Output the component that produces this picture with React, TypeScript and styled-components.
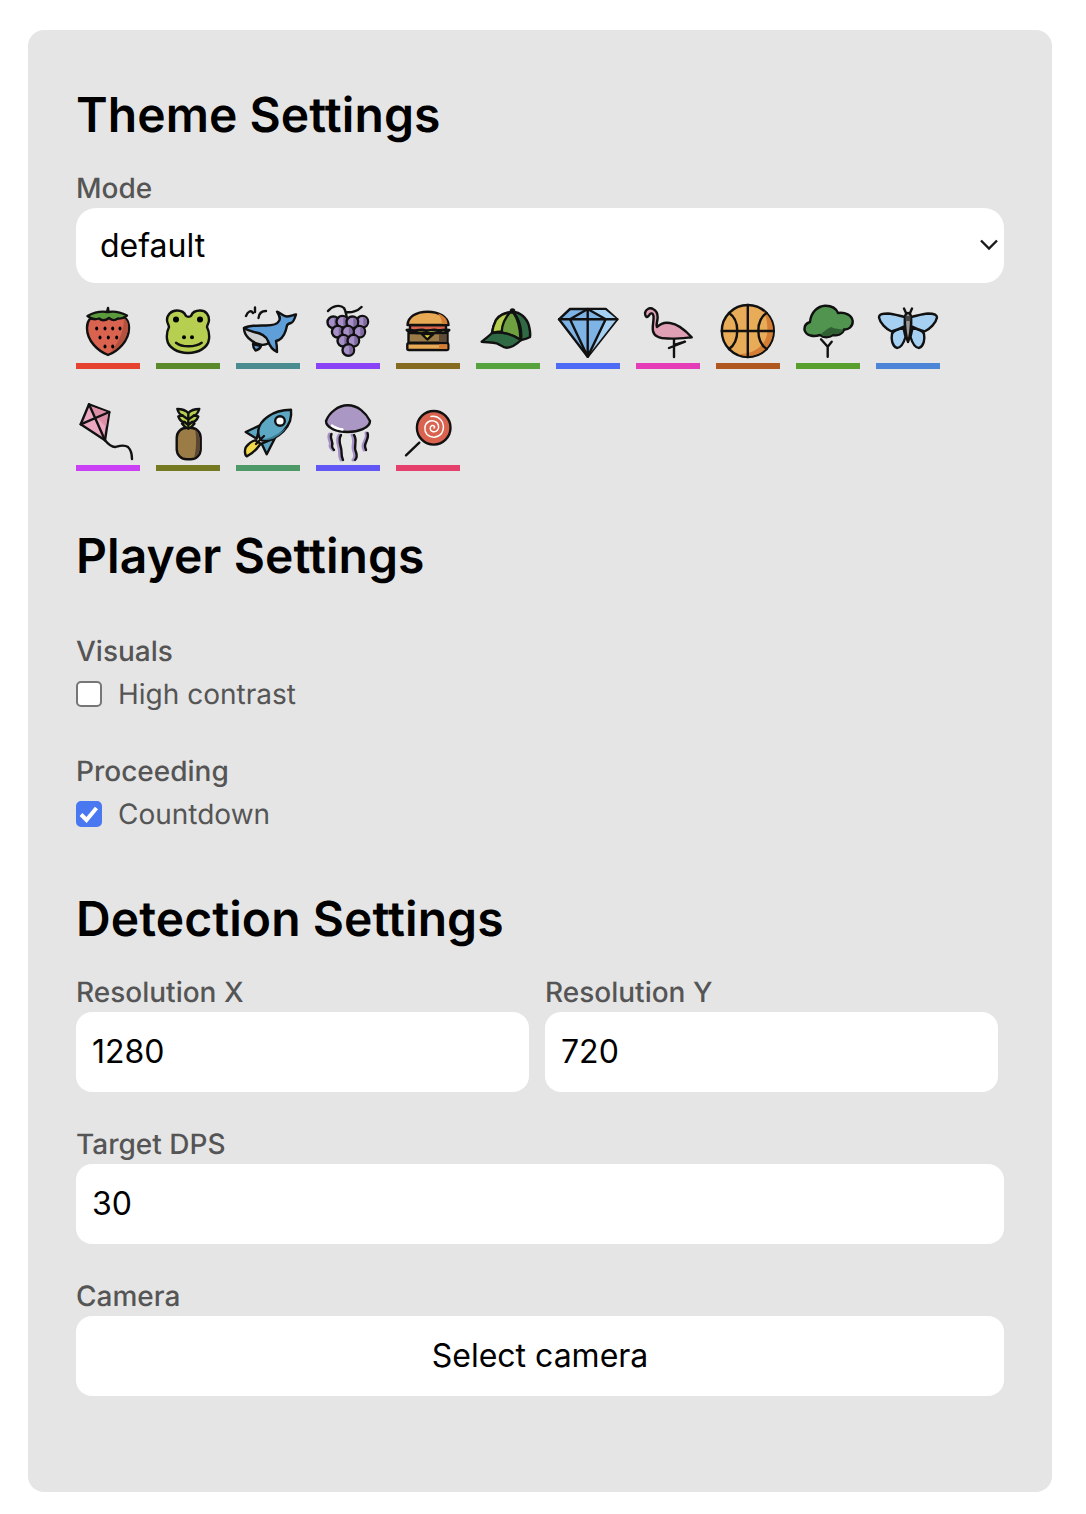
import React from "react";
import styled, { createGlobalStyle } from "styled-components";

const Global = createGlobalStyle`
  html, body { margin: 0; padding: 0; background: #fff; }
  body { font-family: Inter, "Liberation Sans", sans-serif; text-rendering: geometricPrecision; }
`;

const Page = styled.div`
  padding: 30px 34px 22px 28px;
`;

const Panel = styled.main`
  background: #e5e5e5;
  border-radius: 16px;
  padding: 56px 48px 96px;
  display: flex;
  flex-direction: column;
`;

const Heading = styled.h2<{ $top?: number; $bottom: number }>`
  margin: ${(p) => p.$top ?? 0}px 0 ${(p) => p.$bottom}px;
  font-size: 48px;
  line-height: 58px;
  font-weight: 600;
  letter-spacing: 0.07px;
  color: #000;
`;

const Label = styled.label`
  display: block;
  font-size: 28px;
  line-height: 34px;
  font-weight: 500;
  margin-bottom: 3px;
  color: #555;
`;

const SelectWrap = styled.div`
  position: relative;
`;

const Select = styled.select`
  display: block;
  width: 100%;
  height: 75px;
  border: none;
  border-radius: 20px;
  background: #fff;
  color: #000;
  padding: 0 24px;
  font: 32px Inter, sans-serif;
  appearance: none;
`;

const Chevron = styled.svg`
  position: absolute;
  right: 6px;
  top: 31px;
  width: 18px;
  height: 12px;
  fill: none;
  stroke: #1a1a1a;
  stroke-width: 2.4;
  pointer-events: none;
`;

const ThemeRow = styled.div`
  display: flex;
  flex-wrap: wrap;
  gap: 36px 16px;
  margin-top: 20px;
  width: 880px;
`;

const ThemeItem = styled.div<{ $color: string }>`
  width: 64px;
  height: 66px;
  box-sizing: border-box;
  padding: 0 4px 4px;
  border-bottom: 6px solid ${(p) => p.$color};
`;

const Glyph = styled.svg`
  display: block;
  width: 56px;
  height: 56px;
  overflow: visible;
  fill: none;
  stroke: #111;
  stroke-width: 2.4;
  stroke-linejoin: round;
  stroke-linecap: round;
  filter: blur(0.35px);
`;

const Group = styled.section<{ $top: number }>`
  margin-top: ${(p) => p.$top}px;
`;

const CheckRow = styled.div`
  display: flex;
  align-items: center;
  height: 34px;
  margin-top: 9px;
  gap: 16px;
  font-size: 28px;
  color: #555;
`;

const Check = styled.input`
  appearance: none;
  box-sizing: border-box;
  width: 26px;
  height: 26px;
  margin: 0;
  border: 2px solid #767676;
  border-radius: 5px;
  background: #fff;
  &:checked {
    border-color: #4a78f0;
    background: #4a78f0 url("data:image/svg+xml,%3Csvg xmlns='http://www.w3.org/2000/svg' viewBox='0 0 26 26'%3E%3Cpath d='M5 13.5L10.5 19L20.5 7' fill='none' stroke='white' stroke-width='4'/%3E%3C/svg%3E") -2px -2px / 26px 26px no-repeat;
  }
`;

const Columns = styled.div`
  display: grid;
  grid-template-columns: 453px 453px;
  gap: 16px;
`;

const NumberInput = styled.input`
  display: block;
  box-sizing: border-box;
  width: 100%;
  height: 80px;
  border: none;
  border-radius: 16px;
  background: #fff;
  color: #000;
  padding: 0 16px 2px;
  font: 32px Inter, sans-serif;
  outline: none;
`;

const Button = styled.button`
  display: block;
  width: 100%;
  height: 80px;
  border: none;
  border-radius: 16px;
  background: #fff;
  color: #000;
  padding: 0 0 2px;
  font: 32px Inter, sans-serif;
`;

const Strawberry = () => (
  <Glyph viewBox="0 0 56 56">
    <path fill="#d9634f" d="M28 52C18 48 7 38 7 25C7 16 12 13 18 13C22 13 25 14 28 15C31 14 35 13 39 13C45 13 49 17 49 25C49 38 38 48 28 52Z" />
    <path fill="#b5513f" stroke="none" d="M44 15C48 18 48.5 22 48 27C46 38 38 46 30 50C36 42 44 32 44 15Z" />
    <path fill="#5c9a3e" d="M28 5L28.5 9C34 8 42 10 47 12.5C44 15 41 16 38 15.5C35 17.5 33 18 29 15C25 18 22 18 19 15.5C15 17 11 16 7.5 13C13 10 21 8 27 9Z" />
    <g fill="#000" stroke="none">
      <ellipse cx="16.7" cy="25.5" rx="1.5" ry="2.1" /><ellipse cx="25" cy="25.5" rx="1.5" ry="2.1" />
      <ellipse cx="32.7" cy="25.5" rx="1.5" ry="2.1" /><ellipse cx="40" cy="25.5" rx="1.5" ry="2.1" />
      <ellipse cx="20" cy="34.5" rx="1.5" ry="2.1" /><ellipse cx="28.3" cy="34.5" rx="1.5" ry="2.1" />
      <ellipse cx="36.7" cy="34.5" rx="1.5" ry="2.1" /><ellipse cx="25" cy="43.5" rx="1.5" ry="2.1" />
      <ellipse cx="32.7" cy="43.5" rx="1.5" ry="2.1" />
    </g>
  </Glyph>
);

const Frog = () => (
  <Glyph viewBox="0 0 56 56">
    <path fill="#b7cf50" d="M17 7.5C22 7.5 25 10.5 26 13C27 14 30 14 31 13C32 10 35 7.5 40 7.5C46 7.5 49 12 49 17C49 20 47 22 47 24C49 28 49.5 32 49 36C48 45 38 50 28 50C18 50 8 45 7 36C6.5 32 7 28 9 24C9 22 7 20 7 17C7 12 11 7.5 17 7.5Z" />
    <g fill="#000" stroke="none">
      <circle cx="16" cy="16.5" r="3" /><circle cx="40" cy="16.5" r="3" />
      <circle cx="24" cy="34.3" r="2" /><circle cx="32" cy="34.3" r="2" />
    </g>
    <path d="M16 39.7C22 44.5 35 44.5 41.7 39.7" />
  </Glyph>
);

const Whale = () => (
  <Glyph viewBox="0 0 56 56">
    <path d="M6 13C8 8 11 7 13 10M15 4.5V9M18.5 15C19 10 22 8 26 8" />
    <path fill="#cfd0d0" d="M4 25C4 32 10 39 20 41.5C24 42.5 28 41 31 38L26 28C18 24 10 24 4 25Z" />
    <path fill="#5f9fd9" d="M13 41C13 44 14 46 15.5 47.5C18 47 20 45.5 21 43Z" />
    <path fill="#5f9fd9" d="M4 25C10 22 18 22.5 26 22.5C32 22.5 37 22 39 18C41 15 39 12 37 8.7C41 10 43 13 46.7 13.5C50 13.5 53 12 56 11.5C55 15 53.5 19 51 20C49 20.5 47.5 21 47 22.5C46 28 44 34 39 37L36 38C37 42 37 46 37 49C33 47 30 44 28 38C26 33 20 30 14 29C10 28 7 27 4 25Z" />
  </Glyph>
);

const GRAPES: [number, number][] = [
  [13.3, 19.3], [22.3, 18.7], [42.3, 18.7], [32.3, 19.3], [17.7, 28.7], [39.3, 28.7], [27.8, 28.7],
  [23.3, 37.7], [33.3, 37.7], [28.3, 47],
];
const Grapes = () => (
  <Glyph viewBox="0 0 56 56">
    <path d="M8 8C12 3 20 1 24 5C26 8 26 12 27 15M26 9C31 10 38 8 41.5 4" />
    {GRAPES.map(([x, y]) => (
      <g key={x + "-" + y}>
        <circle cx={x} cy={y} r="5.8" fill="#a68fc6" />
        <path fill="#7f6a9e" stroke="none" d={`M${x + 1} ${y - 4.7}A4.8 4.8 0 0 1 ${x + 1} ${y + 4.7}Z`} />
      </g>
    ))}
  </Glyph>
);

const Burger = () => (
  <Glyph viewBox="0 0 56 56">
    <path fill="#d9634f" d="M10 22H46V28H10Z" />
    <path fill="#e8a954" d="M7.5 22C8 14 16 8.7 27.5 8.7C39 8.7 48 14 48.5 22Z" />
    <path fill="#d47e35" stroke="none" d="M38 10.5C44 12.5 47.5 16 47.5 21H42C42 17 40 13 38 10.5Z" />
    <path fill="#9b7c47" d="M8.5 30H47.5V39.7H8.5Z" />
    <path fill="#5f4a36" stroke="none" d="M39 31H46.5V39H39Z" />
    <path fill="#f1dd35" d="M21.7 31L33.3 31L27.3 36.5Z" />
    <path fill="#b7cf50" d="M6.7 27C10 26 12 27.5 15 27.5C19 27.5 21 26 24 27C28 28.5 32 26 36 27C40 28 45 26 49.3 27C47 30 44 30.5 40 29.5C36 29 33 31 28 29.8C23 29 20 30.5 15 29.8C12 29.5 9 30 6.7 27Z" />
    <rect x="7.3" y="40.3" width="41" height="6.7" rx="1.5" fill="#e8a954" />
    <path fill="#d47e35" stroke="none" d="M39 41.3H47.3V46H39Z" />
  </Glyph>
);

const Cap = () => (
  <Glyph viewBox="0 0 56 56">
    <path fill="#2f6a45" d="M33 9C40 9 47 15 49 23C50 27 50.5 31 50 34C47 36 44 36.5 41 37L33 30Z" />
    <path fill="#6ea042" d="M33 9C26 9 19 12 16 17C14 21 12.5 26 12 30C22 28 34 32 41 37C42 28 40 16 33 9Z" />
    <path fill="#b5cf4e" d="M30 9.5C24 10 19 13 16 17C14 21 12.5 26 12 30C15 29 19 28.5 21.7 28.5C22 22 25 15 30 9.5Z" />
    <path d="M33 9C36 13 40 22 40.5 36" />
    <path fill="#2f6a45" d="M12 30C22 28 34 32 41 37C37 41 32 44.5 26.7 44.7C23 44.5 20 41.5 16.7 40.3C12 39 6 39.5 1.7 38.7C5 36 9 33 12 30Z" />
    <circle cx="32.5" cy="8" r="1.6" fill="#000" />
  </Glyph>
);

const Diamond = () => (
  <Glyph viewBox="0 0 56 56">
    <path fill="#7eb3e6" d="M10 6H45.7L57.3 16.3L27.7 53.7L-1 16.3Z" />
    <path fill="#a5d0f2" stroke="none" d="M28 7H45.4L56 15.5H46Z" />
    <path fill="#a5d0f2" stroke="none" d="M46 17H56L29 51.5Z" />
    <path d="M-1 16.3H57.3M10 16.3L27.7 6L45.7 16.3M10 16.3L27.7 53.7L45.7 16.3M27.7 6V53.7" />
  </Glyph>
);

const Flamingo = () => (
  <Glyph viewBox="0 0 56 56">
    <path d="M34 36V54M34 42L45 38.7L29 45" />
    <path fill="#dfa0b6" d="M5 10C6 6 10 4 13 6C17 8 18 12 17.5 16C17 20 16 22 17 24C20 21 25 19 30 20C38 21 46 28 51.7 34.3C44 35 36 36 28 35.5C20 35.5 14 33 13 28C12 23 14 18 13.5 13C13 10 11 10 10 11C9 13 8 14 6.5 14C5 13 5 11.5 5 10Z" />
  </Glyph>
);

const Basketball = () => (
  <Glyph viewBox="0 0 56 56">
    <circle cx="27.8" cy="28" r="26" fill="#e8ab57" />
    <path fill="#d47e35" stroke="none" d="M44 8C50 14 53 20 53 28C53 42 42 53 28 53C24 53 21 52.5 18 51C32 52 44 44 47 32C48 24 47 15 44 8Z" />
    <path d="M1.8 28H53.8M27.8 2V54M9 10C20 17 20 38 9 46M46.6 10C35.6 17 35.6 38 46.6 46" />
  </Glyph>
);

const Tree = () => (
  <Glyph viewBox="0 0 56 56">
    <path d="M27.7 53.7V43.7M27.7 43.7L21 36.3M27.7 43.7L31.7 38.7" />
    <path fill="#51944f" d="M10 19C11 9 18 3 25 2.7C32 2.5 36 5 38 10C45 9 52 12 52.7 18C53 24 48 27 44 26.5C43 31 37 33 33 32C29 35 23 35 20 32C14 34 6 33 4.5 27C4 22 7 20 10 19Z" />
    <path fill="#2f5f33" stroke="none" d="M21 31C24 28 27 26 31 24C35 26 39 26 43.5 26.5C42 30.5 37 32 33 31C29 34 24 34 21 31Z" />
  </Glyph>
);

const Butterfly = () => (
  <Glyph viewBox="0 0 56 56">
    <path d="M24 5.5L26 10M32 5.5L30 10" />
    <path fill="#a5d0f2" d="M23.5 25C18 26 13 28 12 31C11 36 12 43 17 45C21 45 24 39 25.5 34ZM32.5 25C38 26 43 28 44 31C45 36 44 43 39 45C35 45 32 39 30.5 34Z" />
    <path fill="#a5d0f2" d="M25 14C20 13 14 11 8 10.5C3 10.5 -1 11 -1 14.5C0 20 6 26 11.5 28.5C16 27 21 25 25 23ZM31 14C36 13 42 11 48 10.5C53 10.5 57 11 57 14.5C56 20 50 26 44.5 28.5C40 27 35 25 31 23Z" />
    <path fill="#999" d="M28 10C30 10 31 12 31 15C31.5 22 30 34 28 39C26 34 24.5 22 25 15C25 12 26 10 28 10Z" />
    <path fill="#444" stroke="none" d="M25.5 13H30.5V18H25.5Z" />
  </Glyph>
);

const Kite = () => (
  <Glyph viewBox="0 0 56 56">
    <path fill="#eba8c0" d="M9 -0.7L29.3 7L25 35.3L0.7 19.3Z" />
    <path fill="#dc8ea5" stroke="none" d="M9 0.5L28.5 7.5L26 22L16 11.5Z" />
    <path d="M9 -0.7L25 35.3M0.7 19.3L29.3 7" />
    <path d="M25 35.3C28 39 31 42 35 42C39 41 44 39 48 42C51 45 52 50 52 54" />
  </Glyph>
);

const Pineapple = () => (
  <Glyph viewBox="0 0 56 56">
    <rect x="16.7" y="22.7" width="24" height="31.6" rx="10" fill="#9b7c47" />
    <path fill="#5a4632" stroke="none" d="M35 24C38 27 39.7 31 39.7 36V43C39.7 48 37 51 34 53C36 47 37 34 35 24Z" />
    <path fill="#b5cf4e" d="M17.3 4C21 4 25 4.5 28.3 8C31.5 4.5 35.5 4 39.3 4C38 8 36.5 10 34 10.5C36 11 37.5 11 38.3 11.5C36.5 16 34 17 32 17C33 17.5 34 18 34.5 18.5C32.5 21.5 30 23 28.3 23.7C26.5 23 24 21.5 22 18.5C22.5 18 23.5 17.5 24.5 17C22.5 17 20 16 18.3 11.5C19 11 20.5 11 22.5 10.5C20 10 18.5 8 17.3 4Z" />
    <path d="M28.3 8V21M22.5 10.5L28.3 14.5L34 10.5M24.5 17L28.3 20L32 17" />
  </Glyph>
);

const Rocket = () => (
  <Glyph viewBox="0 0 56 56">
    <path fill="#f2d94a" d="M20.7 38.7C17 44 12 49 6.7 51.3C4.5 50 4.5 44 6 42C9 38 12 36 15 35.3Z" />
    <path fill="#5ca8c4" d="M20 20.3L5.7 27L16.7 33.7Z" />
    <path fill="#5ca8c4" d="M35 33L26.7 49.3L21.7 38.7Z" />
    <path fill="#5ca8c4" d="M51 4.7C42 4.7 34 7 28 11.5C23 15 19 20 18.3 25.3C18 29 19 33 21.7 35.3C25 36 29 35.5 33.3 33.7C40 30 47 24 50 16C51 12 51.5 8 51 4.7Z" />
    <path fill="#3c7d94" stroke="none" d="M21 34.5C24 34.5 36 32 46 23C42 29 36 32.5 33 33.7C29 35 25 35.5 21 34.5Z" />
    <path d="M16 39L24 31" />
    <circle cx="40" cy="16" r="4.8" fill="#fff" />
  </Glyph>
);

const Jellyfish = () => (
  <Glyph viewBox="0 0 56 56">
    <path stroke="#a68fc6" strokeWidth="3" d="M9.5 29C7 33 12 37 10 41C10 43 12 44 13 45M19 30C15 36 20 42 19.5 47C19.5 50 20 53 21 55M32 30C36 36 31 42 34 47C35 50 35 53 33 55M46 28C48 33 43 37 43 41C43 43 44 44 44 45" />
    <path d="M11.5 29C9 33 14 37 12 41C12 43 13 44 14 45M21 30C17 36 22 42 21.5 47C21.5 50 22 53 23 55M34 30C38 36 33 42 36 47C37 50 37 53 35 55M47.5 28C49.5 33 45 37 45 41C45 43 46 44 46 45" />
    <path fill="#ab97c4" d="M6 16C9 8 18 0.3 27.7 0.3C38 0.3 46 8 50 16C50 23 38 27 27.7 27C17 27 6 23 6 16Z" />
    <path stroke="#fff" d="M12 20.5C15 23 19 24 22.5 24.5" />
  </Glyph>
);

const Lollipop = () => (
  <Glyph viewBox="0 0 56 56">
    <path d="M6 50.3L19.3 37.7" />
    <circle cx="33.7" cy="22.8" r="16.8" fill="#d9634f" />
    <path stroke="#fff" strokeWidth="1.5" d="M34 23C35.5 22 34 20 32 20.5C29.5 21.5 29.5 25.5 32.5 26.5C36.5 27.8 39.5 24 38.5 20.5C37.5 16 32 14.5 28 17C24 19.5 24 26 27 29.5C31 33.5 38 33 41.5 28.5C44.5 24.5 44 18 40.5 14.5C38 12 34 11 31 11.5" />
  </Glyph>
);

const THEMES: { color: string; Icon: React.FC }[] = [
  { color: "#e5432f", Icon: Strawberry },
  { color: "#5a8a2b", Icon: Frog },
  { color: "#4a8c8f", Icon: Whale },
  { color: "#8a44f5", Icon: Grapes },
  { color: "#846b20", Icon: Burger },
  { color: "#56a23c", Icon: Cap },
  { color: "#4d6bf5", Icon: Diamond },
  { color: "#e53db8", Icon: Flamingo },
  { color: "#b0561f", Icon: Basketball },
  { color: "#589f2e", Icon: Tree },
  { color: "#4d86d6", Icon: Butterfly },
  { color: "#c940f5", Icon: Kite },
  { color: "#757a22", Icon: Pineapple },
  { color: "#4d9968", Icon: Rocket },
  { color: "#6257f5", Icon: Jellyfish },
  { color: "#e53f6b", Icon: Lollipop },
];

export default function App() {
  return (
    <Page>
      <Global />
      <Panel>
        <Heading $bottom={27}>Theme Settings</Heading>
        <Label>Mode</Label>
        <SelectWrap>
          <Select defaultValue="default">
            <option value="default">default</option>
          </Select>
          <Chevron viewBox="0 0 18 12">
            <path d="M1 1.5L9 9.5L17 1.5" />
          </Chevron>
        </SelectWrap>
        <ThemeRow>
          {THEMES.map(({ color, Icon }) => (
            <ThemeItem key={color} $color={color}>
              <Icon />
            </ThemeItem>
          ))}
        </ThemeRow>
        <Heading $top={56} $bottom={0}>Player Settings</Heading>
        <Group $top={49}>
          <Label>Visuals</Label>
          <CheckRow>
            <Check type="checkbox" readOnly />
            High contrast
          </CheckRow>
        </Group>
        <Group $top={43}>
          <Label>Proceeding</Label>
          <CheckRow>
            <Check type="checkbox" defaultChecked />
            Countdown
          </CheckRow>
        </Group>
        <Heading $top={59} $bottom={27}>Detection Settings</Heading>
        <Columns>
          <div>
            <Label>Resolution X</Label>
            <NumberInput defaultValue="1280" />
          </div>
          <div>
            <Label>Resolution Y</Label>
            <NumberInput defaultValue="720" />
          </div>
        </Columns>
        <Group $top={35}>
          <Label>Target DPS</Label>
          <NumberInput defaultValue="30" />
        </Group>
        <Group $top={35}>
          <Label>Camera</Label>
          <Button>Select camera</Button>
        </Group>
      </Panel>
    </Page>
  );
}
